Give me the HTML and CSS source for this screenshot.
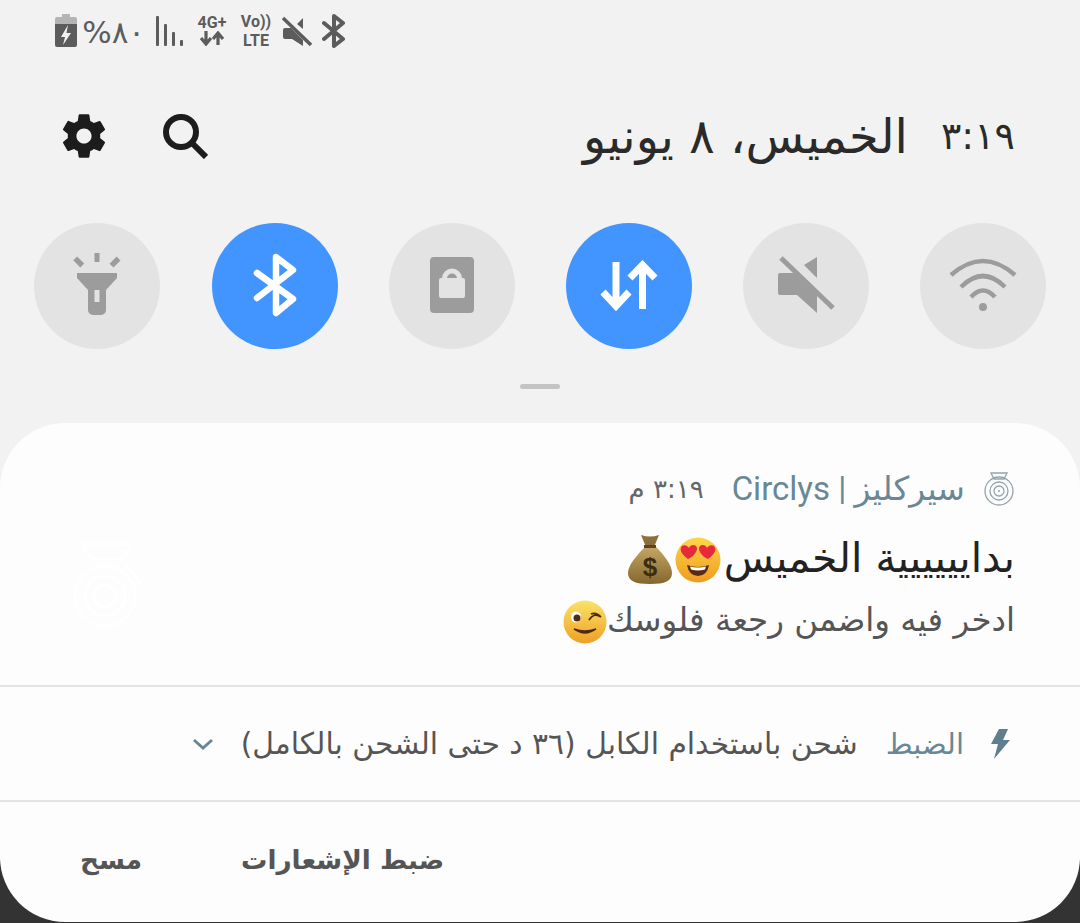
FILE: index.html
```html
<!DOCTYPE html>
<html lang="ar" dir="rtl">
<head>
    <meta charset="UTF-8">
    <meta name="viewport" content="width=device-width, initial-scale=1.0">
    <title>Notification panel</title>
    <link rel="stylesheet" href="styles.css">
</head>
<body>
    <div class="panel">
        <div class="status" dir="ltr">
            <svg class="st-battery" viewBox="0 0 22 33"><path d="M7 0h8v3h5a2 2 0 0 1 2 2v6H0V5a2 2 0 0 1 2-2h5z" fill="#b4b4b4"/><path d="M0 10h22v21a2 2 0 0 1-2 2H2a2 2 0 0 1-2-2z" fill="#5c5c5c"/><path d="M13 11l-7 12h4l-2 8 8-12h-4.500z" fill="#f2f2f2"/></svg>
            <span class="st-percent" dir="rtl">٨٠%</span>
            <svg class="st-signal" viewBox="0 0 28 30"><g fill="#5c5c5c"><rect x="0" y="0" width="3" height="30" rx="1"/><rect x="8" y="8" width="3" height="22" rx="1"/><rect x="16" y="16" width="3" height="14" rx="1"/><rect x="24" y="24" width="3" height="6" rx="1"/></g></svg>
            <div class="st-net">
                <span>4G+</span>
                <svg viewBox="0 0 28 15"><path d="M8 0v11M3 7l5 6 5-6M20 14V3M15 8l5-6 5 6" fill="none" stroke="#5c5c5c" stroke-width="3.200"/></svg>
            </div>
            <div class="st-volte"><span>Vo))</span><span>LTE</span></div>
            <svg class="st-mute" viewBox="0 0 30 32"><path d="M3 13H9L21 25V31L10 24H3a2 2 0 0 1-2-2V15a2 2 0 0 1 2-2zM15 9l6-6V14z" fill="#5c5c5c"/><path d="M1 3l28 27" stroke="#5c5c5c" stroke-width="3.500"/></svg>
            <svg class="st-bt" viewBox="0 0 24 34"><path d="M2 9l19 16-9 7V2l9 7L2 25" fill="none" stroke="#5c5c5c" stroke-width="4" stroke-linejoin="round" stroke-linecap="round"/></svg>
        </div>

        <div class="head">
            <div class="clock"><span class="clock-time">٣:١٩</span><span>الخميس، ٨ يونيو</span></div>
            <div class="head-icons">
                <svg class="ic-search" viewBox="0 0 46 46"><circle cx="19" cy="19" r="15" fill="none" stroke="#1c1c1c" stroke-width="6"/><path d="M30 30l14 14" stroke="#1c1c1c" stroke-width="6"/></svg>
                <svg class="ic-gear" viewBox="0 0 24 24"><path fill="#1c1c1c" d="M19.430 12.980c.04-.32.070-.64.070-.98s-.03-.66-.07-.98l2.110-1.650c.19-.15.240-.42.120-.64l-2-3.460c-.12-.22-.39-.3-.61-.22l-2.490 1c-.52-.4-1.080-.73-1.690-.98l-.38-2.650C14.460 2.180 14.250 2 14 2h-4c-.25 0-.46.180-.49.420l-.38 2.650c-.61.25-1.170.59-1.690.98l-2.490-1c-.23-.09-.49 0-.61.220l-2 3.460c-.13.220-.07.490.12.640l2.110 1.650c-.04.320-.07.650-.07.980s.03.660.07.980l-2.110 1.650c-.19.150-.24.420-.12.640l2 3.460c.12.220.39.300.61.220l2.490-1c.52.400 1.080.730 1.690.980l.38 2.650c.03.240.24.420.49.420h4c.25 0 .46-.18.49-.42l.38-2.650c.61-.25 1.170-.59 1.690-.98l2.490 1c.23.090.49 0 .61-.22l2-3.460c.12-.22.070-.49-.12-.64l-2.110-1.650zM12 15.500c-1.930 0-3.500-1.570-3.500-3.500s1.570-3.500 3.500-3.500 3.500 1.570 3.500 3.500-1.570 3.500-3.500 3.500z"/></svg>
            </div>
        </div>

        <div class="toggles">
            <div class="toggle">
                <svg viewBox="0 0 126 126"><g fill="none" stroke="#9c9c9c" stroke-width="4.500" stroke-linecap="butt"><path d="M31 52Q63 24 95 52"/><path d="M41 64Q63 42 85 64"/><path d="M51 74Q63 61 75 74"/></g><circle cx="63" cy="84" r="4" fill="#9c9c9c"/></svg>
            </div>
            <div class="toggle">
                <svg viewBox="0 0 126 126"><path fill="#9c9c9c" d="M37 50H52L74 70V90L54 72H37a2 2 0 0 1-2-2V52a2 2 0 0 1 2-2zM61 42L74 34V55z"/><path d="M38 35l52 50" stroke="#9c9c9c" stroke-width="5"/></svg>
            </div>
            <div class="toggle on">
                <svg viewBox="0 0 126 126"><path d="M50 39V82M37 69L50 83L63 69M76.500 86V43M64 55L76.500 42L89 55" fill="none" stroke="#fff" stroke-width="7"/></svg>
            </div>
            <div class="toggle">
                <svg viewBox="0 0 126 126"><rect x="41" y="34" width="44" height="56" rx="4" fill="#9c9c9c"/><rect x="50" y="55" width="26" height="20" rx="2" fill="#e3e3e3"/><path d="M55.500 58V55.500a7.500 7.500 0 0 1 15 0V58" fill="none" stroke="#e3e3e3" stroke-width="5"/></svg>
            </div>
            <div class="toggle on">
                <svg viewBox="0 0 126 126"><path d="M45 50L81 76L64 90V34L81 47L45 75" fill="none" stroke="#fff" stroke-width="6.500" stroke-linejoin="round" stroke-linecap="round"/></svg>
            </div>
            <div class="toggle">
                <svg viewBox="0 0 126 126"><g fill="#9c9c9c"><rect x="60.500" y="30" width="5" height="9"/><rect x="42" y="34" width="5.500" height="10" transform="rotate(-45 44.700 39)"/><rect x="78.300" y="34" width="5.500" height="10" transform="rotate(45 81 39)"/><path d="M43 50H83V55L72 67V87a5 5 0 0 1-5 5H59a5 5 0 0 1-5-5V67L43 55z"/></g><rect x="60.500" y="67" width="5" height="12" fill="#e3e3e3"/></svg>
            </div>
        </div>

        <div class="handle"></div>

        <div class="card">
            <section class="notif">
                <div class="notif-head">
                    <svg class="app-icon" viewBox="0 0 32 34"><g fill="none" stroke="#93a4ad" stroke-width="1.300"><path d="M8 1h16l-3 6H11z"/><circle cx="16" cy="19" r="14"/><circle cx="16" cy="19" r="9"/><circle cx="16" cy="19" r="5"/></g><circle cx="16" cy="19" r="1" fill="#93a4ad"/></svg>
                    <span class="app-name">سيركليز | Circlys</span>
                    <span class="notif-time">٣:١٩ م</span>
                </div>
                <div class="notif-main">
                    <div class="notif-text">
                        <h2 class="notif-title">بدايييييية الخميس<svg class="emoji hearts" viewBox="0 0 46 46"><defs><linearGradient id="faceA" x1="0" y1="0" x2="0" y2="1"><stop offset="0" stop-color="#fbd84a"/><stop offset="1" stop-color="#f09a1e"/></linearGradient></defs><circle cx="23" cy="23" r="22.500" fill="url(#faceA)"/><path d="M12 28q11 4 22 0q-2 11-11 11T12 28z" fill="#5b2a14"/><path d="M15 29.500q8 2 16 0l-1 3q-7 2-14 0z" fill="#fff"/><path d="M13 22C6 17 4 12 7 9c3-2 6 0 7 2 1-3 5-4 7-2 3 3-1 10-8 13z" fill="#e8293b"/><path d="M33 22C40 17 42 12 39 9c-3-2-6 0-7 2-1-3-5-4-7-2-3 3 1 10 8 13z" fill="#e8293b"/></svg><svg class="emoji bag" viewBox="0 0 44 50"><defs><linearGradient id="bagA" x1="0" y1="0" x2="0" y2="1"><stop offset="0" stop-color="#c4a766"/><stop offset="1" stop-color="#85662c"/></linearGradient></defs><path d="M13 1q9 3 18 0l-5 12H18z" fill="#8b6f3a"/><path d="M17 13h11c8 8 16 18 16 26 0 8-7 11-22 11S0 47 0 39c0-8 9-18 17-26z" fill="url(#bagA)"/><rect x="16" y="11" width="12" height="3" fill="#5b4520"/><text x="22" y="42" class="bag-sign">$</text></svg></h2>
                        <p class="notif-body">ادخر فيه واضمن رجعة فلوسك<svg class="emoji wink" viewBox="0 0 44 44"><defs><linearGradient id="faceB" x1="0" y1="0" x2="0" y2="1"><stop offset="0" stop-color="#fbe26a"/><stop offset="1" stop-color="#efa024"/></linearGradient></defs><circle cx="22" cy="22" r="21.500" fill="url(#faceB)"/><ellipse cx="13" cy="17" rx="5" ry="5.500" fill="#fff"/><circle cx="14" cy="18" r="3.500" fill="#4d2c15"/><path d="M26 20q5-8 12-3M28 14q5-2 10 3" fill="none" stroke="#4d2c15" stroke-width="1.800"/><path d="M11 29q11 8 22 0q-11 4-22 0z" fill="#4d2c15" stroke="#4d2c15" stroke-width="1.500"/></svg></p>
                    </div>
                    <svg class="watermark" viewBox="0 0 70 86"><g fill="none" stroke="#fff" stroke-width="2.500"><path d="M9 3H59L49 18H19z"/><circle cx="32" cy="55" r="30"/><circle cx="32" cy="55" r="20"/><circle cx="32" cy="55" r="11"/><path d="M52 24l16 18"/></g></svg>
                </div>
            </section>

            <div class="charge">
                <svg class="bolt" viewBox="0 0 22 30"><path d="M11 0h9l-5 11h7L6 30l4-15H3z" fill="#5f7f8f"/></svg>
                <span class="charge-link">الضبط</span>
                <span class="charge-text">شحن باستخدام الكابل (٣٦ د حتى الشحن بالكامل)</span>
                <svg class="chevron" viewBox="0 0 22 12"><path d="M2 2l9 8 9-8" fill="none" stroke="#6a8796" stroke-width="3"/></svg>
            </div>

            <div class="actions">
                <span>ضبط الإشعارات</span>
                <span>مسح</span>
            </div>
        </div>
    </div>
</body>
</html>
```

FILE: styles.css
```css
* { box-sizing: border-box; }
html, body { margin: 0; padding: 0; }
body { width: 1080px; height: 923px; overflow: hidden; background-color: #333; font-family: "DejaVu Sans", sans-serif; }
svg { display: block; flex: none; }

.panel { height: 923px; background: linear-gradient(#f2f2f2 860px, #333 860px); display: flex; flex-direction: column; }

.status { height: 62px; padding: 14px 0 0 55px; display: flex; align-items: flex-start; color: #5c5c5c; }
.st-battery { width: 22px; height: 33px; }
.st-percent { width: 56px; margin-left: 12px; font-size: 31px; line-height: 36px; text-align: center; }
.st-signal { width: 28px; height: 30px; margin: 2px 0 0 11px; }
.st-net { width: 32px; margin-left: 12px; font-family: Roboto, sans-serif; font-size: 16px; font-weight: bold; line-height: 17px; text-align: center; }
.st-net svg { width: 28px; height: 15px; margin: 0 auto; }
.st-volte { display: flex; flex-direction: column; width: 34px; margin: -2px 0 0 11px; font-family: Roboto, sans-serif; font-size: 16px; font-weight: bold; line-height: 19px; text-align: center; }
.st-mute { width: 30px; height: 32px; margin: 1px 0 0 9px; }
.st-bt { width: 24px; height: 34px; margin-left: 10px; }

.head { height: 148px; padding: 0 65px 0 62px; display: flex; align-items: center; justify-content: space-between; }
.clock { display: flex; align-items: center; gap: 33px; font-size: 48px; line-height: 60px; color: #2a2a2a; }
.clock-time { font-size: 38px; }
.head-icons { display: flex; align-items: center; gap: 52px; }
.ic-search { width: 46px; height: 46px; }
.ic-gear { width: 52px; height: 52px; margin-left: -4px; }

.toggles { padding: 13px 34px 0; display: flex; gap: 51px; }
.toggle { width: 126px; height: 126px; border-radius: 50%; background-color: #e3e3e3; }
.toggle:last-child { margin-right: 1px; }
.toggle svg { width: 126px; height: 126px; }
.toggle.on { background-color: #4295fe; }

.handle { width: 40px; height: 5px; margin: 35px auto 34px; border-radius: 3px; background-color: #c4c4c4; }

.card { height: 499px; background-color: #fdfdfd; border-radius: 65px; }
.notif { height: 264px; padding: 48px 65px 0 0; border-bottom: 2px solid #e4e4e4; }
.notif-head { display: flex; align-items: center; height: 36px; color: #6a8796; }
.app-icon { width: 32px; height: 34px; }
.app-name { margin-right: 18px; font-family: Roboto, "DejaVu Sans", sans-serif; font-size: 33px; line-height: 36px; }
.notif-time { margin-right: 28px; font-size: 26px; line-height: 36px; color: #666; }
.notif-main { display: flex; justify-content: space-between; padding-left: 73px; }
.notif-text { flex: 1; }
.notif-title { margin: 22px 0 0; height: 58px; display: flex; align-items: center; font-size: 41px; line-height: 58px; font-weight: normal; color: #222; }
.notif-body { margin: 10px 0 0; height: 46px; display: flex; align-items: center; font-size: 32.500px; line-height: 46px; color: #555; }
.emoji { width: 46px; height: 46px; }
.emoji.hearts { margin: 4px 3px 0 0; }
.emoji.bag { width: 44px; height: 50px; margin: 2px 3px 0 0; }
.emoji.wink { width: 44px; height: 44px; margin-top: 4px; }
.bag-sign { font-family: "Liberation Sans", sans-serif; font-size: 26px; font-weight: bold; fill: #3d2c10; text-anchor: middle; }
.watermark { width: 70px; height: 86px; margin-top: 34px; }

.charge { height: 115px; padding-right: 70px; display: flex; align-items: center; border-bottom: 2px solid #e4e4e4; }
.bolt { width: 22px; height: 30px; }
.charge-link { margin-right: 24px; font-size: 29px; color: #6a8796; }
.charge-text { margin-right: 28px; font-size: 29.800px; color: #555; }
.chevron { width: 22px; height: 12px; margin-right: 27px; }

.actions { height: 118px; padding: 0 80px 3px 80px; display: flex; align-items: center; justify-content: flex-end; gap: 99px; font-size: 26.300px; font-weight: bold; color: #555; }
```
